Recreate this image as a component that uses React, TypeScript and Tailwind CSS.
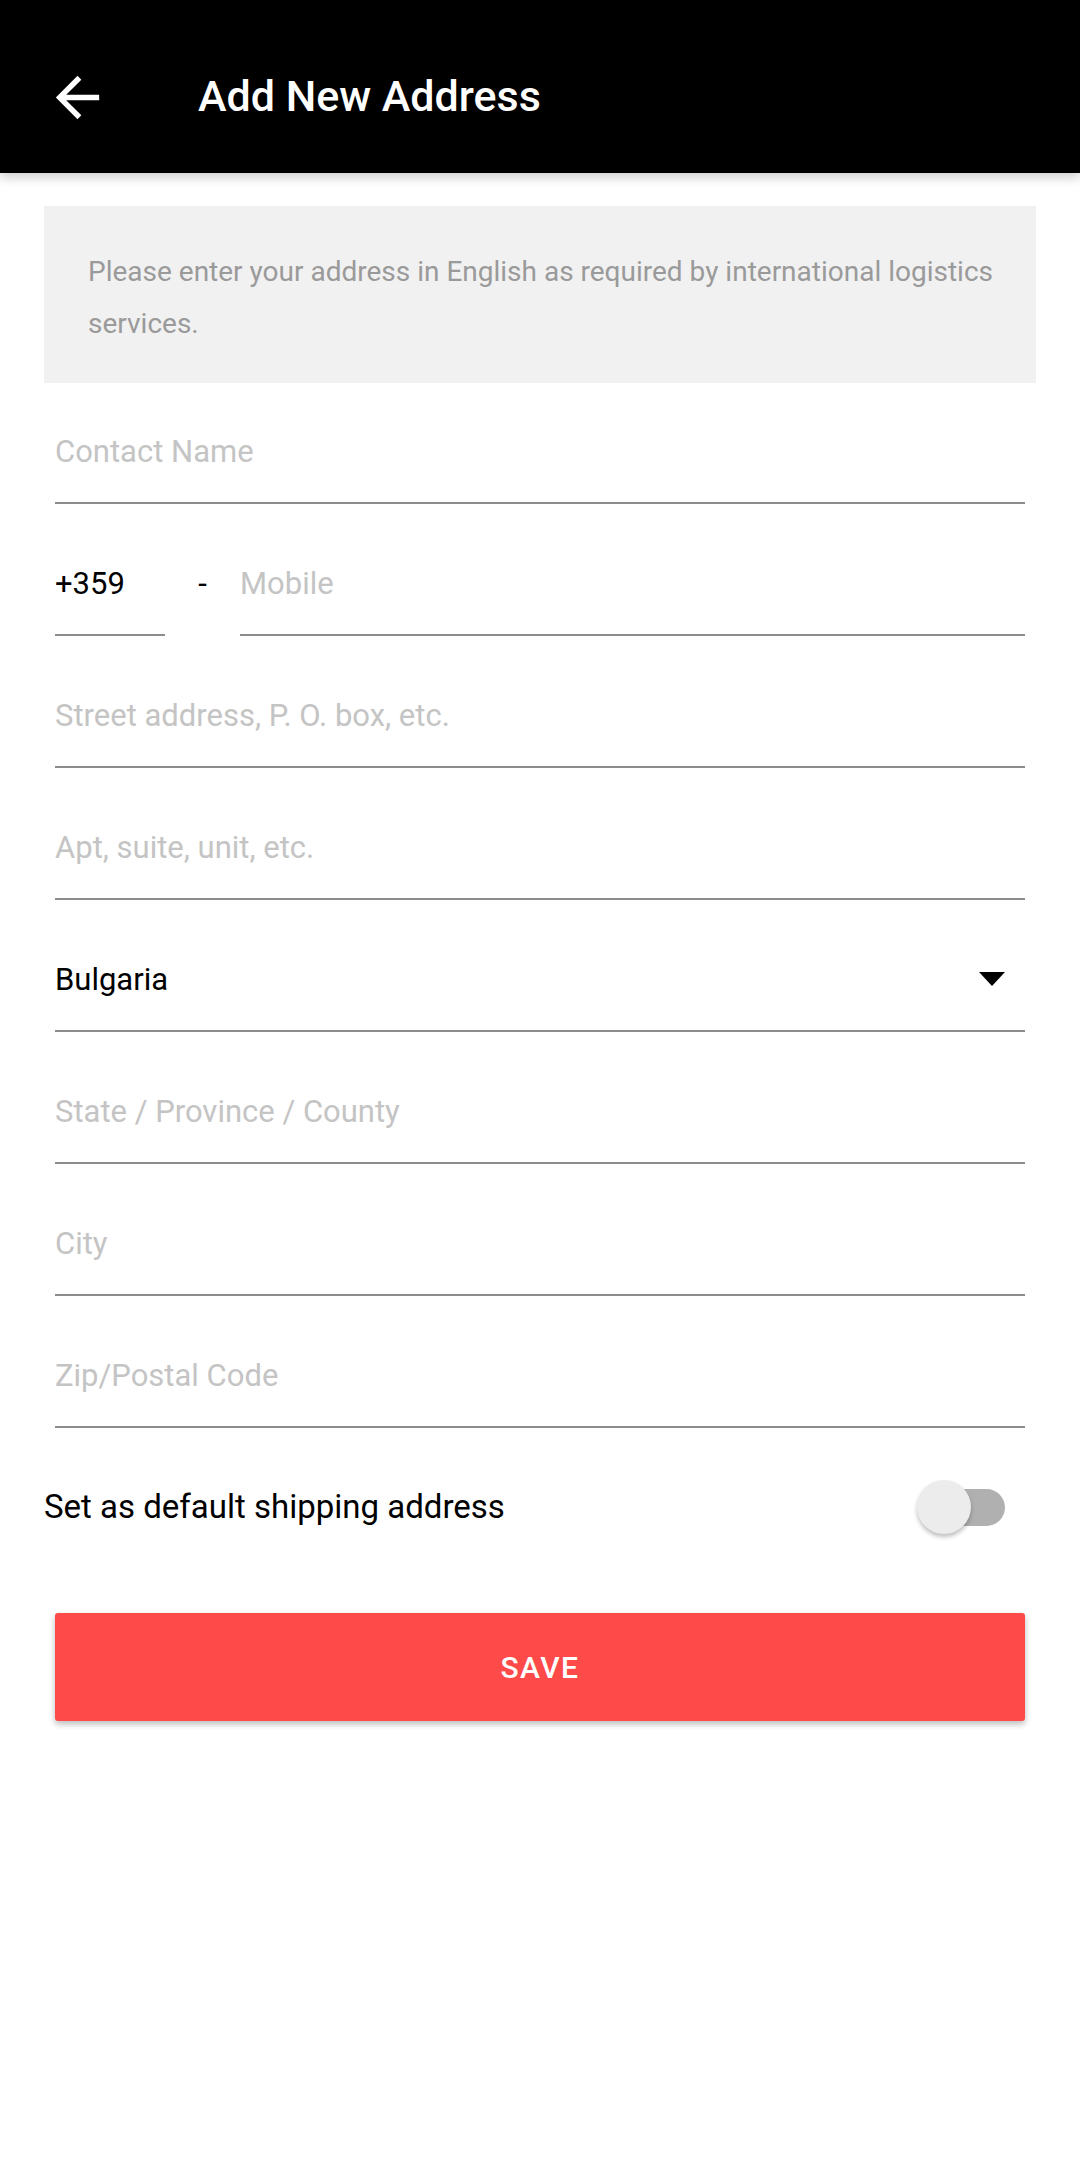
import React from "react";

const font = { fontFamily: "Roboto, 'Noto Sans', Arial, sans-serif" };

function Field({ placeholder, h = "h-[132px]" }: { placeholder: string; h?: string }) {
  return (
    <div className={`${h} flex items-end pb-[30px] border-b-2 border-[#8c8c8c]`}>
      <span className="text-[31px] leading-[40px] text-[#c4c4c4]">{placeholder}</span>
    </div>
  );
}

export default function App() {
  return (
    <div className="w-[1080px] h-[2177px] bg-white" style={font}>
      <header className="relative z-10 h-[173px] bg-black flex items-center pt-[22px] shadow-[0_5px_10px_rgba(0,0,0,0.18)]">
        <svg className="ml-[45px]" width="65" height="65" viewBox="0 0 24 24" fill="white">
          <path d="M20 11H7.83l5.59-5.59L12 4l-8 8 8 8 1.41-1.41L7.83 13H20v-2z" />
        </svg>
        <h1 className="ml-[88px] mb-[2px] text-white text-[43px] font-medium leading-none">Add New Address</h1>
      </header>

      <div className="mx-[44px] mt-[33px] h-[177px] bg-[#f1f1f1] pl-[44px] pr-[40px] pt-[40px]">
        <p className="text-[28px] leading-[52px] text-[#9a9a9a]">
          Please enter your address in English as required by international logistics services.
        </p>
      </div>

      <div className="px-[55px]">
        <Field placeholder="Contact Name" h="h-[121px]" />

        <div className="h-[132px] flex items-end">
          <div className="w-[110px] h-full flex items-end pb-[30px] border-b-2 border-[#8c8c8c]">
            <span className="text-[31px] leading-[40px] text-black">+359</span>
          </div>
          <div className="w-[75px] h-full flex items-end justify-center pb-[32px]">
            <span className="text-[31px] leading-[40px] text-black">-</span>
          </div>
          <div className="flex-1 h-full flex items-end pb-[30px] border-b-2 border-[#8c8c8c]">
            <span className="text-[31px] leading-[40px] text-[#c4c4c4]">Mobile</span>
          </div>
        </div>

        <Field placeholder="Street address, P. O. box, etc." />
        <Field placeholder="Apt, suite, unit, etc." />

        <div className="h-[132px] flex items-end justify-between pb-[30px] border-b-2 border-[#8c8c8c]">
          <span className="text-[31px] leading-[40px] text-black">Bulgaria</span>
          <svg className="mr-[20px] mb-[14px]" width="26" height="14" viewBox="0 0 26 14">
            <polygon points="0,0 26,0 13,14" fill="black" />
          </svg>
        </div>

        <Field placeholder="State / Province / County" />
        <Field placeholder="City" />
        <Field placeholder="Zip/Postal Code" />
      </div>

      <div className="h-[158px] flex items-center justify-between pl-[44px] pr-[75px]">
        <span className="text-[33px] text-black">Set as default shipping address</span>
        <div className="relative w-[88px] h-[37px] flex items-center">
          <div className="absolute right-0 w-[80px] h-[37px] rounded-full bg-[#b0b0b0]" />
          <div className="absolute left-0 w-[54px] h-[54px] rounded-full bg-[#ececec] shadow-[0_3px_4px_rgba(0,0,0,0.25)]" />
        </div>
      </div>

      <div className="px-[55px] mt-[27px]">
        <button className="w-full h-[108px] bg-[#ff4a4a] rounded-[3px] shadow-[0_3px_6px_rgba(0,0,0,0.28)] text-white text-[30px] font-medium tracking-[1.5px]">
          SAVE
        </button>
      </div>
    </div>
  );
}
